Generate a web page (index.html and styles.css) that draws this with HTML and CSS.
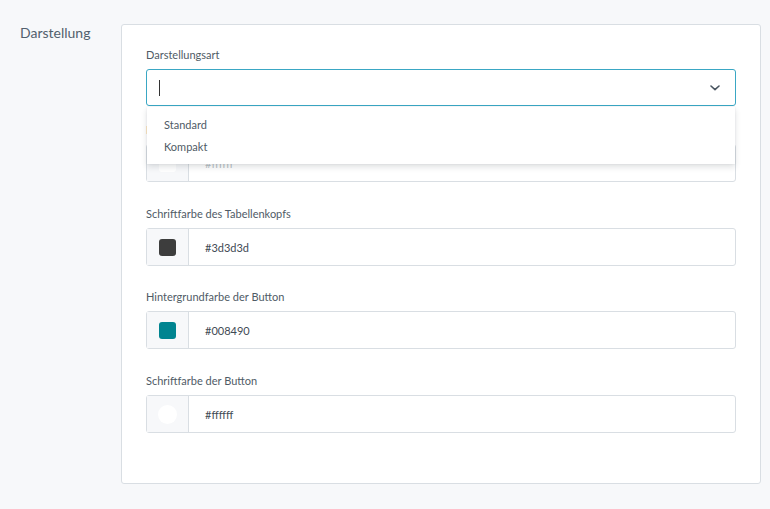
FILE: index.html
```html
<!DOCTYPE html>
<html lang="de">
<head>
<meta charset="utf-8">
<title>Darstellung</title>
<link rel="stylesheet" href="styles.css">
</head>
<body>
<div class="page">
  <div class="section-title">Darstellung</div>
  <div class="card">
    <div class="field field-select">
      <div class="label">Darstellungsart</div>
      <div class="select-wrap">
        <div class="select">
          <span class="caret"></span>
          <svg class="chevron" width="10" height="6" viewBox="0 0 10 6"><path d="M1 1 L5 4.6 L9 1" fill="none" stroke="#4a5661" stroke-width="1.6" stroke-linecap="round" stroke-linejoin="round"/></svg>
        </div>
        <div class="menu">
          <div class="menu-item">Standard</div>
          <div class="menu-item">Kompakt</div>
        </div>
      </div>
    </div>
    <div class="field field-wide">
      <div class="label">Hintergrundfarbe des Tabellenkopfs</div>
      <div class="color-input">
        <div class="swatch-box"><span class="swatch" style="background:#ffffff"></span></div>
        <div class="value value-faint">#ffffff</div>
      </div>
    </div>
    <div class="field">
      <div class="label">Schriftfarbe des Tabellenkopfs</div>
      <div class="color-input">
        <div class="swatch-box"><span class="swatch" style="background:#3d3d3d"></span></div>
        <div class="value">#3d3d3d</div>
      </div>
    </div>
    <div class="field field-wide">
      <div class="label">Hintergrundfarbe der Button</div>
      <div class="color-input">
        <div class="swatch-box"><span class="swatch" style="background:#008490"></span></div>
        <div class="value">#008490</div>
      </div>
    </div>
    <div class="field field-last">
      <div class="label">Schriftfarbe der Button</div>
      <div class="color-input">
        <div class="swatch-box"><span class="swatch swatch-round" style="background:#ffffff"></span></div>
        <div class="value">#ffffff</div>
      </div>
    </div>
  </div>
</div>
</body>
</html>
```

FILE: styles.css
```css
html, body {
  margin: 0;
  padding: 0;
  background: #f7f8fa;
}
body {
  font-family: Lato, "Noto Sans", sans-serif;
  color: #52606d;
}
.page {
  display: flex;
  align-items: flex-start;
  padding: 24px 9px 0 20px;
}
.section-title {
  width: 101px;
  flex: none;
  font-size: 14px;
  line-height: 18px;
  color: #52606d;
}
.card {
  flex: 1;
  background: #ffffff;
  border: 1px solid #d9dee3;
  border-radius: 3px;
  padding: 23px 24px 50px 24px;
}
.field {
  margin-bottom: 24px;
}
.field-wide {
  margin-bottom: 25px;
}
.field-select {
  margin-bottom: 17px;
  position: relative;
  z-index: 2;
}
.field-last {
  margin-bottom: 0;
}
.label {
  font-size: 11px;
  line-height: 14px;
  margin-bottom: 7px;
  color: #4f5b66;
}
.select-wrap {
  position: relative;
}
.select {
  height: 37px;
  box-sizing: border-box;
  border: 1px solid #3aa7c4;
  border-radius: 3px;
  background: #fff;
  display: flex;
  align-items: center;
  justify-content: space-between;
  padding: 0 15px 0 12px;
}
.caret {
  display: block;
  width: 1px;
  height: 16px;
  background: #333;
}
.chevron {
  display: block;
}
.menu {
  position: absolute;
  left: 1px;
  right: 1px;
  top: 38px;
  background: #fff;
  box-shadow: 0 3px 6px rgba(30, 40, 50, 0.14), 0 0 2px rgba(30, 40, 50, 0.08);
  padding: 7px 0 6px 0;
}
.menu-item {
  font-size: 11px;
  line-height: 22px;
  padding-left: 17px;
  color: #4f5b66;
}
.color-input {
  display: flex;
  height: 38px;
  box-sizing: border-box;
  border: 1px solid #d9dee3;
  border-radius: 3px;
  background: #fff;
}
.swatch-box {
  width: 41px;
  flex: none;
  background: #f7f8fa;
  border-right: 1px solid #d9dee3;
  display: flex;
  align-items: center;
  justify-content: center;
}
.swatch {
  display: block;
  width: 17px;
  height: 17px;
  border-radius: 3px;
}
.swatch-round {
  width: 19px;
  height: 19px;
  border-radius: 50%;
}
.value {
  display: flex;
  align-items: center;
  padding-left: 16px;
  font-size: 11px;
  color: #3f4a54;
}
.value-faint {
  color: #b8bfc6;
}
```
